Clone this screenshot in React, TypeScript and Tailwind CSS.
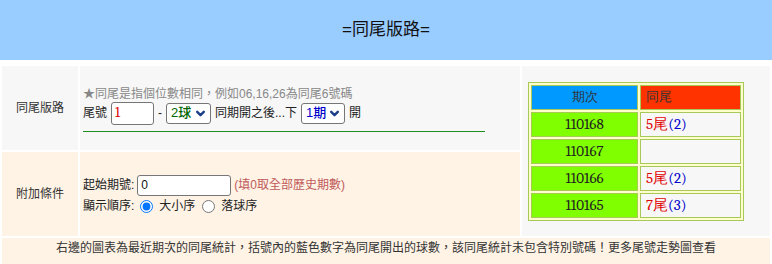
import React from 'react';

const rows = [
    { no: '110168', tail: '5', count: '2' },
    { no: '110167', tail: '', count: '' },
    { no: '110166', tail: '5', count: '2' },
    { no: '110165', tail: '7', count: '3' },
];

function Chevron({ className }: { className?: string }) {
    return (
        <svg viewBox="0 0 10 10" className={className} fill="none" stroke="currentColor" strokeWidth="2.2" strokeLinecap="round" strokeLinejoin="round">
            <path d="M2 3.5 L5 6.5 L8 3.5" />
        </svg>
    );
}

function FakeSelect({ label, color, width }: { label: string; color: string; width: string }) {
    return (
        <span className={`inline-flex items-center justify-between h-[21px] px-[4px] border border-[#767676] rounded-[3px] bg-white text-[13px] font-medium ${color} ${width}`}>
            <span>{label}</span>
            <Chevron className="w-[11px] h-[11px] text-[#1b3f8a]" />
        </span>
    );
}

export default function App() {
    return (
        <div className="w-[772px] h-[264px] overflow-hidden bg-white text-[12px] text-[#222] font-['Liberation_Sans','Noto_Sans_CJK_TC',sans-serif]">
            <div className="h-[60px] bg-[#99ccff] flex items-center justify-center text-[17px] text-[#111]">
                =同尾版路=
            </div>

            <table className="mt-[4px] w-full border-separate border-spacing-[2px]">
                <tbody>
                    <tr>
                        <td className="w-[76px] h-[84px] bg-[#f7f7f7] text-center text-[#333]">同尾版路</td>
                        <td className="w-[440px] bg-[#f7f7f7] pl-[3px] pt-[2px] align-middle">
                            <div className="text-[#888] leading-[15px]">★同尾是指個位數相同，例如06,16,26為同尾6號碼</div>
                            <div className="flex items-center gap-[4px] leading-[22px]">
                                <span>尾號</span>
                                <span className="inline-flex items-center w-[43px] h-[23px] border border-[#767676] rounded-[3px] bg-white pl-[3px] text-[#e00000] font-serif text-[14px]">1</span>
                                <span>-</span>
                                <FakeSelect label="2球" color="text-[#006600]" width="w-[45px]" />
                                <span>同期開之後...下</span>
                                <FakeSelect label="1期" color="text-[#0000cc]" width="w-[44px]" />
                                <span>開</span>
                            </div>
                            <div className="mt-[6px] w-[402px] border-t border-[#1f8f1f]" />
                        </td>
                        <td rowSpan={2} className="bg-[#f7f7f7] pl-[6px] align-middle">
                            <table className="w-[216px] border border-[#a8c85a] bg-[#ffffcc] border-separate border-spacing-[2px] font-serif text-[15px]">
                                <tbody>
                                    <tr>
                                        <td className="w-[107px] h-[25px] bg-[#0099ff] border border-[#a8c85a] text-center text-[#333] text-[13px]">期次</td>
                                        <td className="h-[25px] bg-[#ff3300] border border-[#a8c85a] pl-[5px] text-[#333] text-[13px]">同尾</td>
                                    </tr>
                                    {rows.map((r) => (
                                        <tr key={r.no}>
                                            <td className="h-[25px] bg-[#80ff00] border border-[#a8c85a] text-center text-[#222]">{r.no}</td>
                                            <td className="h-[25px] bg-[#f7f7f7] border border-[#a8c85a] pl-[5px]">
                                                {r.tail && (
                                                    <>
                                                        <span className="text-[#e00000]">{r.tail}尾</span>
                                                        <span className="text-[#0000cc]">({r.count})</span>
                                                    </>
                                                )}
                                            </td>
                                        </tr>
                                    ))}
                                </tbody>
                            </table>
                        </td>
                    </tr>
                    <tr>
                        <td className="h-[84px] bg-[#fff3e6] text-center text-[#333]">附加條件</td>
                        <td className="bg-[#fff3e6] pl-[3px] pt-[2px] align-middle">
                            <div className="flex items-center gap-[3px] leading-[22px]">
                                <span>起始期號:</span>
                                <span className="inline-flex items-center w-[94px] h-[21px] border border-[#767676] rounded-[3px] bg-white pl-[3px] text-[#111]">0</span>
                                <span className="text-[#c05a5a]">(填0取全部歷史期數)</span>
                            </div>
                            <div className="flex items-center gap-[3px] leading-[20px]">
                                <span>顯示順序:</span>
                                <input type="radio" name="order" defaultChecked className="w-[13px] h-[13px] m-[3px] accent-[#0075ff]" />
                                <span>大小序</span>
                                <input type="radio" name="order" className="w-[13px] h-[13px] m-[3px] ml-[4px]" />
                                <span>落球序</span>
                            </div>
                        </td>
                    </tr>
                    <tr>
                        <td colSpan={3} className="h-[26px] bg-[#fff3e6] text-center align-top leading-[20px] text-[#333]">
                            右邊的圖表為最近期次的同尾統計，括號內的藍色數字為同尾開出的球數，該同尾統計未包含特別號碼！更多尾號走勢圖查看
                        </td>
                    </tr>
                </tbody>
            </table>
        </div>
    );
}
